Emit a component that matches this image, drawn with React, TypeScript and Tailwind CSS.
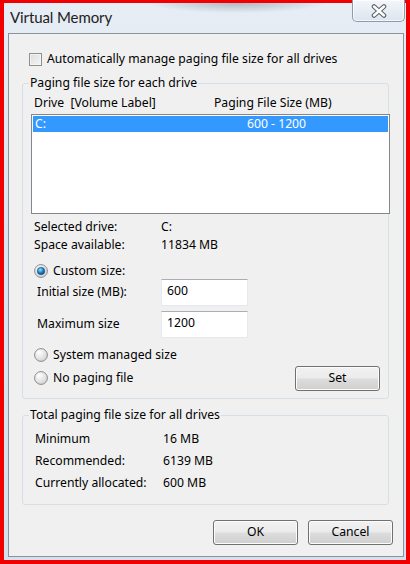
import React from "react";

const font = { fontFamily: '"Segoe UI", "Noto Sans", "Open Sans", sans-serif' };

function Radio({ checked }: { checked?: boolean }) {
  return (
    <svg width="14" height="14" viewBox="0 0 14 14" className="shrink-0">
      <defs>
        <radialGradient id="rbg" cx="0.35" cy="0.3" r="0.8">
          <stop offset="0" stopColor="#ffffff" />
          <stop offset="1" stopColor="#d0d0d0" />
        </radialGradient>
        <radialGradient id="rdot" cx="0.4" cy="0.35" r="0.7">
          <stop offset="0" stopColor="#9ee2fb" />
          <stop offset="0.5" stopColor="#1d8ac7" />
          <stop offset="1" stopColor="#0b3f74" />
        </radialGradient>
      </defs>
      <circle cx="7" cy="7" r="6.4" fill="url(#rbg)" stroke="#8a8a8a" strokeWidth="1" />
      {checked && <circle cx="7" cy="7" r="3.8" fill="url(#rdot)" stroke="#164d80" strokeWidth="0.5" />}
    </svg>
  );
}

function Button({ children, w }: { children: React.ReactNode; w: string }) {
  return (
    <div
      className={`${w} h-[25px] rounded-[3px] border border-[#707070] bg-[linear-gradient(#f2f2f2_0%,#ebebeb_48%,#dddddd_52%,#cfcfcf_100%)] flex items-center justify-center text-[12.2px] text-black shadow-[inset_0_0_0_1px_#fcfcfc]`}
    >
      {children}
    </div>
  );
}

export default function App() {
  return (
    <div className="w-[410px] h-[564px] bg-[#f00000] pl-[4px] pr-[4px] pb-[4px] flex flex-col" style={font}>
      <div className="flex-1 flex flex-col border-t-[3px] border-[#f00000] bg-[radial-gradient(ellipse_90px_10px_at_58%_0%,rgba(110,120,135,0.45),transparent),linear-gradient(180deg,#e6edf5_0%,#dae5f1_40%,#d3e0ee_100%)] pl-[4px] pr-[2px]">
        {/* title bar */}
        <div className="h-[30px] flex items-start justify-between">
          <div className="mt-[4px] ml-[2px] text-[15px] leading-[20px] tracking-[-0.1px] text-[#222]" style={{ fontFamily: 'Lato, "Noto Sans", sans-serif' }}>
            Virtual Memory
          </div>
          <div className="mt-[-3px] mr-[-1px] w-[53px] h-[22px] rounded-b-[5px] border border-t-0 border-[#8b9aad] bg-[linear-gradient(#f4f7fb,#dbe4ee)] flex items-center justify-center shadow-[inset_0_0_0_1px_rgba(255,255,255,0.7)]">
            <svg width="18" height="14" viewBox="0 0 18 14">
              <path d="M4 2.5 L14 11.5 M14 2.5 L4 11.5" stroke="#5b6570" strokeWidth="4.6" strokeLinecap="round" />
              <path d="M4 2.5 L14 11.5 M14 2.5 L4 11.5" stroke="#ffffff" strokeWidth="2.4" strokeLinecap="round" />
            </svg>
          </div>
        </div>
        {/* client */}
        <div className="flex-1 mb-[3px] border border-[#8b939c] bg-[#f0f0f0] flex flex-col pl-[13px] pr-[14px] text-[12.2px] text-black">
          <div className="mt-[18px] h-[14px] flex items-center">
            <div className="ml-[7px] w-[13px] h-[13px] border border-[#8e8f8f] bg-[linear-gradient(135deg,#dcdcdc,#f6f6f6)] shadow-[inset_0_0_0_1px_#f4f4f4]" />
            <span className="ml-[5px] leading-[14px]">Automatically manage paging file size for all drives</span>
          </div>

          <fieldset className="mt-[9px] border border-[#d5dfe5] rounded-[3px] flex flex-col">
            <legend className="ml-[6px] px-[1px] h-[16px] leading-[16px]">Paging file size for each drive</legend>
            <div className="mt-[4px] h-[16px] flex items-center pl-[11px] leading-[16px]">
              <span className="w-[180px] whitespace-pre">Drive  [Volume Label]</span>
              <span>Paging File Size (MB)</span>
            </div>
            <div className="mt-[3px] ml-[8px] mr-[-2px] h-[100px] border border-[#828790] bg-white p-[1px]">
              <div className="h-[16px] bg-[#3399ff] text-white flex items-center leading-[16px]">
                <span className="ml-[2px] w-[212px]">C:</span>
                <span>600 - 1200</span>
              </div>
            </div>
            <div className="mt-[4px] pl-[11px] flex flex-col">
              <div className="h-[18px] flex items-center">
                <span className="w-[127px]">Selected drive:</span>
                <span>C:</span>
              </div>
              <div className="h-[18px] flex items-center">
                <span className="w-[127px]">Space available:</span>
                <span>11834 MB</span>
              </div>
              <div className="mt-[9px] h-[16px] flex items-center">
                <Radio checked />
                <span className="ml-[5px]">Custom size:</span>
              </div>
              <div className="h-[27px] flex items-center">
                <span className="ml-[3px] w-[124px]">Initial size (MB):</span>
                <div className="w-[87px] h-[27px] border border-[#e3e9ef] border-t-[#abadb3] bg-white pl-[5px] pt-[3px] leading-[16px]">600</div>
              </div>
              <div className="mt-[5px] h-[27px] flex items-center">
                <span className="ml-[3px] w-[124px]">Maximum size</span>
                <div className="w-[87px] h-[27px] border border-[#e3e9ef] border-t-[#abadb3] bg-white pl-[5px] pt-[3px] leading-[16px]">1200</div>
              </div>
              <div className="mt-[9px] h-[16px] flex items-center">
                <Radio />
                <span className="ml-[5px]">System managed size</span>
              </div>
              <div className="mt-[3px] h-[25px] flex items-center justify-between pr-[8px]">
                <div className="flex items-center">
                  <Radio />
                  <span className="ml-[5px]">No paging file</span>
                </div>
                <Button w="w-[85px]">Set</Button>
              </div>
            </div>
            <div className="h-[7px]" />
          </fieldset>

          <fieldset className="mt-[8px] border border-[#d5dfe5] rounded-[3px] flex flex-col">
            <legend className="ml-[6px] px-[1px] h-[16px] leading-[16px]">Total paging file size for all drives</legend>
            <div className="mt-[5px] pl-[12px] flex flex-col">
              <div className="h-[22px] flex items-center">
                <span className="w-[128px]">Minimum</span>
                <span>16 MB</span>
              </div>
              <div className="h-[22px] flex items-center">
                <span className="w-[128px]">Recommended:</span>
                <span>6139 MB</span>
              </div>
              <div className="h-[22px] flex items-center">
                <span className="w-[128px]">Currently allocated:</span>
                <span>600 MB</span>
              </div>
            </div>
            <div className="h-[10px]" />
          </fieldset>

          <div className="mt-[15px] mr-[-4px] flex justify-end gap-[10px]">
            <Button w="w-[85px]">OK</Button>
            <Button w="w-[85px]">Cancel</Button>
          </div>
        </div>
      </div>
    </div>
  );
}
